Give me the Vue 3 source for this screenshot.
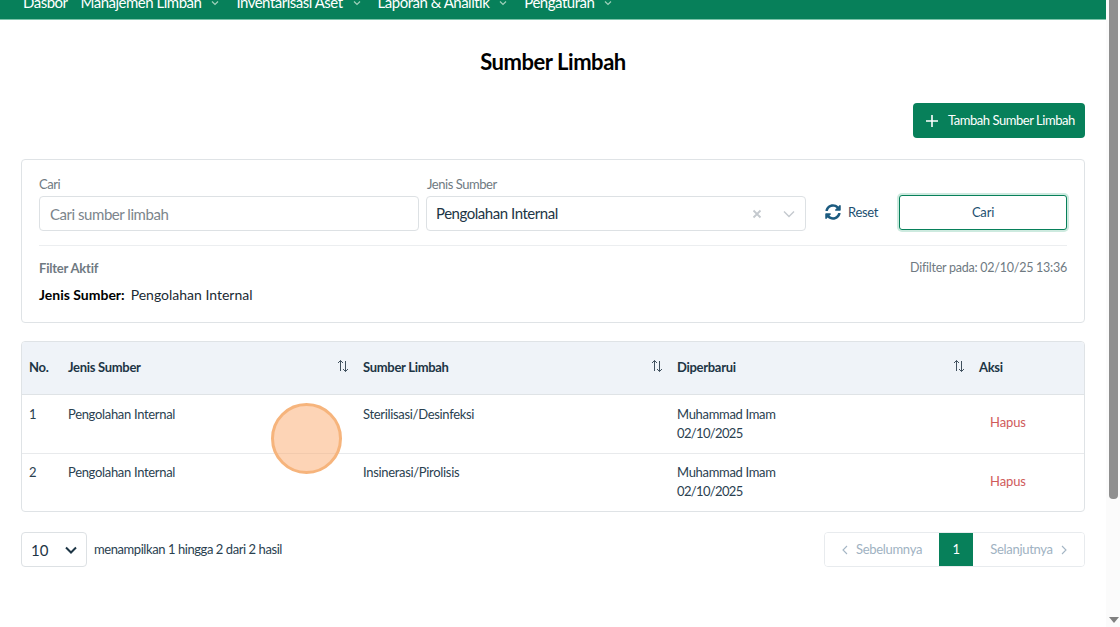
<script setup>
const navItems = [
  { label: 'Dasbor', caret: false },
  { label: 'Manajemen Limbah', caret: true },
  { label: 'Inventarisasi Aset', caret: true },
  { label: 'Laporan & Analitik', caret: true },
  { label: 'Pengaturan', caret: true },
]
const rows = [
  { no: 1, jenis: 'Pengolahan Internal', sumber: 'Sterilisasi/Desinfeksi', user: 'Muhammad Imam', date: '02/10/2025' },
  { no: 2, jenis: 'Pengolahan Internal', sumber: 'Insinerasi/Pirolisis', user: 'Muhammad Imam', date: '02/10/2025' },
]
const sortCols = ['Jenis Sumber', 'Sumber Limbah', 'Diperbarui']
</script>

<template>
  <div class="shell">
    <div class="main">
      <nav class="nav">
        <a v-for="item in navItems" :key="item.label" class="nav-item" :class="{ caret: item.caret }">
          <span>{{ item.label }}</span>
          <svg v-if="item.caret" width="8" height="6" viewBox="0 0 8 6" fill="none"><path d="M1 1.5l3 3 3-3" stroke="#9fd0bb" stroke-width="1.2"/></svg>
        </a>
      </nav>

      <div class="content">
        <h1 class="title">Sumber Limbah</h1>

        <div class="toolbar">
          <button class="add-btn">
            <svg width="14" height="14" viewBox="0 0 14 14" fill="none"><path d="M7 1v12M1 7h12" stroke="#fff" stroke-width="1.6"/></svg>
            <span>Tambah Sumber Limbah</span>
          </button>
        </div>

        <section class="card">
          <div class="filters">
            <div class="field">
              <label>Cari</label>
              <div class="input placeholder">Cari sumber limbah</div>
            </div>
            <div class="field">
              <label>Jenis Sumber</label>
              <div class="input select">
                <span>Pengolahan Internal</span>
                <svg class="clear" width="10" height="10" viewBox="0 0 10 10" fill="none"><path d="M1.5 1.5l7 7M8.500 1.500l-7 7" stroke="#c4c9ce" stroke-width="1.8"/></svg>
                <svg class="chev" width="12" height="8" viewBox="0 0 12 8" fill="none"><path d="M1 1.500l5 5 5-5" stroke="#c4c9ce" stroke-width="1.4"/></svg>
              </div>
            </div>
            <button class="reset">
              <svg width="18" height="16" viewBox="0 0 512 512" fill="#1c5b80"><path d="M370.7 133.3C339.5 104 298.9 88 255.800 88c-77.500.1-144.300 53.200-162.800 126.900-1.300 5.400-6.100 9.100-11.600 9.100H24.100c-7.500 0-13.200-6.800-11.800-14.200C33.900 94.900 134.800 8 256 8c66.400 0 126.800 26.100 171.300 68.700L463 41C478.100 25.900 504 36.600 504 57.900V192c0 13.300-10.700 24-24 24H345.900c-21.400 0-32.100-25.900-17-41l41.800-41.700zM32 296h134.100c21.400 0 32.100 25.900 17 41l-41.800 41.800c31.300 29.300 71.900 45.300 115 45.200 77.400-.1 144.300-53.100 162.800-126.800 1.300-5.400 6.100-9.100 11.600-9.100h57.300c7.500 0 13.200 6.800 11.800 14.200C478.100 417.100 377.200 504 256 504c-66.400 0-126.800-26.100-171.300-68.700L49 471C33.900 486.100 8 475.400 8 454.100V320c0-13.300 10.700-24 24-24z"/></svg>
              <span>Reset</span>
            </button>
            <button class="search">Cari</button>
          </div>

          <div class="active-head">
            <span class="active-title">Filter Aktif</span>
            <span class="stamp">Difilter pada: 02/10/25 13:36</span>
          </div>
          <div class="active-value"><b>Jenis Sumber:</b><span>Pengolahan Internal</span></div>
        </section>

        <section class="table-wrap">
          <table>
            <colgroup>
              <col style="width: 39px" /><col style="width: 295px" /><col style="width: 314px" /><col style="width: 302px" /><col />
            </colgroup>
            <thead>
              <tr>
                <th>No.</th>
                <th v-for="c in sortCols" :key="c">
                  <div class="th-in">
                    <span>{{ c }}</span>
                    <svg width="12" height="14" viewBox="0 0 12 14" fill="none" stroke="#40505e" stroke-width="1"><path d="M3.500 12V1.500M1 4l2.500-2.500L6 4M8.500 2v10.500M6 10l2.500 2.500L11 10"/></svg>
                  </div>
                </th>
                <th>Aksi</th>
              </tr>
            </thead>
            <tbody>
              <tr v-for="r in rows" :key="r.no">
                <td>{{ r.no }}</td>
                <td>{{ r.jenis }}</td>
                <td>{{ r.sumber }}</td>
                <td><div>{{ r.user }}</div><div class="date">{{ r.date }}</div></td>
                <td class="action"><span>Hapus</span></td>
              </tr>
            </tbody>
          </table>
        </section>

        <footer class="pager-row">
          <div class="per-page">
            <span>10</span>
            <svg width="12" height="8" viewBox="0 0 12 8" fill="none"><path d="M1 1.500l5 5 5-5" stroke="#1d3545" stroke-width="2"/></svg>
          </div>
          <span class="summary">menampilkan 1 hingga 2 dari 2 hasil</span>
          <div class="pager">
            <button class="pg prev">
              <svg width="6" height="10" viewBox="0 0 6 10" fill="none"><path d="M5 1L1 5l4 4" stroke="#a5b6c5" stroke-width="1.1"/></svg>
              <span>Sebelumnya</span>
            </button>
            <button class="pg current">1</button>
            <button class="pg next">
              <span>Selanjutnya</span>
              <svg width="6" height="10" viewBox="0 0 6 10" fill="none"><path d="M1 1l4 4-4 4" stroke="#a5b6c5" stroke-width="1.1"/></svg>
            </button>
          </div>
        </footer>
      </div>

      <div class="pointer"></div>
    </div>

    <aside class="scrollbar">
      <div class="thumb"></div>
      <div class="arrow"></div>
    </aside>
  </div>
</template>

<style>
html, body { margin: 0; overflow: hidden; background: #fff; }
</style>

<style scoped>
* { box-sizing: border-box; }
.shell {
  display: flex;
  width: 1120px;
  height: 627px;
  overflow: hidden;
  font-family: Lato, "Liberation Sans", sans-serif;
  color: #1d3545;
}
.main { position: relative; width: 1106px; flex: none; height: 627px; overflow: hidden; }

.nav {
  height: 20px;
  background: #07805a;
  border-bottom: 1px solid #7cc4aa;
  display: flex;
  align-items: flex-end;
  padding: 0 0 8px 23px;
  gap: 13px;
  color: #fff;
  font-size: 15px;
  letter-spacing: -0.5px;
  line-height: 18px;
  overflow: hidden;
}
.nav-item { display: flex; align-items: center; gap: 10px; white-space: nowrap; flex: none; }
.nav-item.caret { margin-right: 4px; }
.nav-item svg { margin-top: 2px; }

.content { padding: 0 21px; }
.title {
  margin: 27px 0 0;
  text-align: center;
  color: #000;
  font-size: 22px;
  font-weight: 700;
  letter-spacing: -0.45px;
  line-height: 30px;
}
.toolbar { display: flex; justify-content: flex-end; margin-top: 26px; }
.add-btn {
  height: 35px;
  width: 172px;
  background: #07805a;
  border: 0;
  border-radius: 4px;
  color: #fff;
  font: 400 13px Lato, sans-serif;
  letter-spacing: -0.46px;
  display: flex;
  align-items: center;
  padding: 0 8px 2px 12px;
  gap: 9px;
  white-space: nowrap;
}
.add-btn svg { flex: none; margin-top: 2px; }

.card {
  margin-top: 21px;
  height: 164px;
  border: 1px solid #dfe3e6;
  border-radius: 4px;
  padding: 16px 17px 0;
}
.filters { display: flex; align-items: flex-end; padding-bottom: 14px; border-bottom: 1px solid #eceef0; height: 70px; }
.field { display: flex; flex-direction: column; width: 380px; margin-right: 7px; flex: none; }
.field:nth-child(2) { margin-right: 18px; }
.field label { font-size: 13px; letter-spacing: -0.45px; line-height: 16px; color: #6f7a82; margin-bottom: 4px; }
.input {
  height: 35px;
  border: 1px solid #dde1e4;
  border-radius: 4px;
  padding: 0 10px;
  display: flex;
  align-items: center;
  font-size: 15px;
  letter-spacing: -0.46px;
  color: #1d3545;
}
.field:nth-child(2) label { padding-left: 1px; }
.select { padding-left: 9px; }
.select span { flex: 1; margin-top: -1px; }
.placeholder { color: #7c858c; }
.clear { margin-right: 21px; }
.reset {
  width: 74px;
  background: none;
  border: 0;
  padding: 0;
  display: flex;
  align-items: center;
  gap: 6px;
  font: 13px Lato, sans-serif;
  letter-spacing: -0.3px;
  color: #1c4f70;
  height: 35px;
  margin-bottom: 2px;
  flex: none;
}
.search {
  margin-left: 1px;
  width: 168px;
  height: 35px;
  flex: none;
  background: #fff;
  border: 1px solid #07805a;
  border-radius: 3px;
  box-shadow: 0 0 0 2px #cdeadf;
  font: 13px Lato, sans-serif;
  letter-spacing: -0.2px;
  color: #1c4f70;
  margin-bottom: 1px;
  padding: 0 0 2px;
}
.active-head { display: flex; justify-content: space-between; align-items: center; margin-top: 14px; line-height: 16px; }
.active-title { font-size: 13px; letter-spacing: -0.2px; font-weight: 700; color: #6f7a82; }
.stamp { font-size: 12.500px; letter-spacing: -0.25px; color: #6f7a82; }
.active-value { margin-top: 10px; font-size: 14px; line-height: 18px; color: #000; display: flex; gap: 6px; }
.active-value span { color: #1a2a33; }
.active-value b { font-weight: 700; }

.table-wrap {
  margin-top: 18px;
  height: 171px;
  border: 1px solid #dfe3e6;
  border-radius: 4px;
  overflow: hidden;
}
table { width: 100%; border-collapse: collapse; table-layout: fixed; font-size: 13px; letter-spacing: -0.32px; color: #2a4150; }
thead tr { height: 52px; background: #eff3f8; border-bottom: 1px solid #dfe3e6; }
th { font-weight: 700; color: #1d3545; text-align: left; padding: 0 7px 2px; font-size: 13px; letter-spacing: -0.3px; }
.th-in { display: flex; align-items: center; justify-content: space-between; }
.th-in svg { margin: -1px 0 0; }
tbody tr { height: 59px; border-bottom: 1px solid #e8eaec; }
tbody tr:last-child { height: 58px; border-bottom: 0; }
td { padding: 10px 7px 0; vertical-align: top; line-height: 19px; }
tbody tr:last-child td { padding-top: 9px; }
.date { letter-spacing: -0.65px; }
td.action { vertical-align: middle; padding: 0 0 2px 18px; color: #cf5a5a; letter-spacing: -0.1px; }
tbody tr:last-child td.action { padding: 0 0 2px 18px; }

.pager-row { display: flex; align-items: center; margin-top: 20px; height: 35px; }
.per-page {
  width: 66px;
  height: 35px;
  border: 1px solid #dde1e4;
  border-radius: 4px;
  display: flex;
  align-items: center;
  justify-content: space-between;
  padding: 0 9px;
  font-size: 15px;
}
.summary { margin-left: 7px; margin-top: -1px; font-size: 13px; letter-spacing: -0.43px; color: #2a4150; }
.pager {
  margin-left: auto;
  display: flex;
  height: 35px;
  border: 1px solid #e8ebee;
  border-radius: 4px;
  overflow: hidden;
}
.pg {
  border: 0;
  background: #fff;
  font: 13px Lato, sans-serif;
  letter-spacing: -0.3px;
  color: #a0b2c2;
  display: flex;
  align-items: center;
  justify-content: center;
  padding: 0 0 2px;
}
.pg svg { margin-top: 2px; }
.prev { width: 114px; gap: 8px; }
.current { width: 34px; background: #07805a; color: #fff; }
.next { width: 111px; gap: 8px; }

.pointer {
  position: absolute;
  left: 271px;
  top: 403px;
  width: 71px;
  height: 71px;
  border-radius: 50%;
  background: rgba(251, 170, 110, 0.5);
  border: 3px solid #f6b47c;
}

.scrollbar { width: 14px; flex: none; background: #fbfbfb; position: relative; display: flex; justify-content: center; }
.thumb { width: 9px; height: 499px; background: #8f8f8f; border-radius: 0 0 4px 4px; margin-left: 1px; }
.arrow {
  position: absolute;
  bottom: 4px;
  left: 3px;
  width: 0;
  height: 0;
  border-left: 5px solid transparent;
  border-right: 5px solid transparent;
  border-top: 6px solid #808080;
}
</style>
